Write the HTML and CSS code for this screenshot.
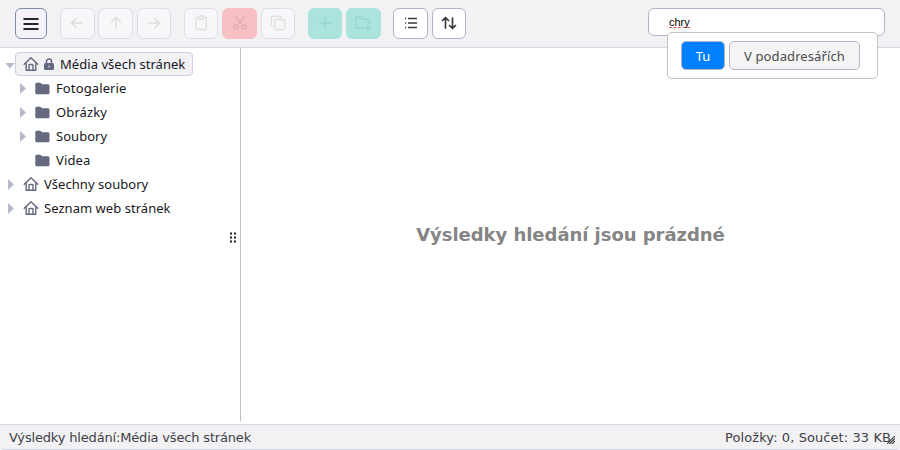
FILE: index.html
```
<!DOCTYPE html>
<html lang="cs">
<head>
<meta charset="utf-8">
<title>Média</title>
<link rel="stylesheet" href="styles.css">
</head>
<body>
<svg class="defs" width="0" height="0">
  <symbol id="home" viewBox="0 0 16 16"><path d="M1.2 8.2 8 1.8l6.800 6.400M3.200 7v7.200h9.600V7M6 14V9.300q0-.8.8-.8h2.400q.8 0 .8.800V14" fill="none" stroke="currentColor" stroke-width="1.400" stroke-linejoin="round" stroke-linecap="round"/></symbol>
  <symbol id="folder" viewBox="0 0 15 13"><path d="M.3 2Q.3.700 1.600.700H5q.8 0 1.200.6l.8 1h6q1.500 0 1.500 1.500v7q0 1.500-1.500 1.500H1.800Q.3 12.300.3 10.800z" fill="currentColor"/></symbol>
</svg>
<div class="app">
  <header class="toolbar">
    <button class="btn menu"><svg width="16" height="14" viewBox="0 0 16 14"><path d="M.5 2h15M.5 7h15M.5 12h15" stroke="#26242c" stroke-width="2"/></svg></button>
    <div class="group">
      <button class="btn off"><svg class="ic" viewBox="0 0 16 16"><path d="M13.500 8H3M7 3.500 2.500 8 7 12.500"/></svg></button>
      <button class="btn off"><svg class="ic" viewBox="0 0 16 16"><path d="M8 13.500V3M3.500 7 8 2.500 12.500 7"/></svg></button>
      <button class="btn off"><svg class="ic" viewBox="0 0 16 16"><path d="M2.500 8H13M9 3.500 13.500 8 9 12.500"/></svg></button>
    </div>
    <div class="group">
      <button class="btn off"><svg class="ic" viewBox="0 0 16 16"><rect x="2.800" y="2.500" width="10.400" height="12" rx="1.500"/><rect x="5.500" y="1" width="5" height="3" rx="1.200" fill="#f7f7f9"/></svg></button>
      <button class="btn red"><svg class="ic" viewBox="0 0 16 16"><path d="M3.500 1.500 10.800 10.700M12.500 1.500 5.200 10.700"/><circle cx="4" cy="12" r="2"/><circle cx="12" cy="12" r="2"/></svg></button>
      <button class="btn off"><svg class="ic" viewBox="0 0 16 16"><rect x="4.800" y="4.500" width="10" height="10" rx="1.500"/><path d="M2.500 11Q1.500 10.800 1.500 9.800V2.500Q1.500 1.300 2.700 1.300H10Q11 1.300 11.200 2.300"/></svg></button>
    </div>
    <div class="group">
      <button class="btn green"><svg class="ic" viewBox="0 0 16 16"><path d="M8 2.500v11M2.500 8h11"/></svg></button>
      <button class="btn green"><svg class="ic" viewBox="0 0 16 16"><path d="M8.500 13H2.200Q1 13 1 11.800V3.200Q1 2 2.200 2h3.300l1.800 2.300h6Q14.500 4.300 14.500 5.500v3.300M13 10.500v5M10.500 13h5"/></svg></button>
    </div>
    <div class="group">
      <button class="btn view"><svg class="ic" viewBox="0 0 16 16"><path d="M5 3.500h9M5 8h9M5 12.500h9M2 3.500h1.200M2 8h1.200M2 12.500h1.200" stroke-linecap="butt"/></svg></button>
      <button class="btn view"><svg class="ic bold" viewBox="0 0 16 16"><path d="M4.500 13V3M1.500 5.500l3-3 3 3M11.500 3v10M8.500 10.500l3 3 3-3"/></svg></button>
    </div>
    <div class="search">
      <span class="query">chry</span>
      <div class="scope"><button class="choice on">Tu</button><button class="choice sub">V podadresářích</button></div>
    </div>
  </header>
  <main class="work">
    <nav class="tree">
      <div class="row root"><i class="down"></i><div class="current"><svg class="home"><use href="#home"/></svg><svg class="lock" viewBox="0 0 10 12"><path d="M2.500 6V3.500a2.500 2.500 0 0 1 5 0V6" fill="none" stroke="currentColor" stroke-width="1.500"/><rect y="5" width="10" height="7" rx="1.500" fill="currentColor"/><path d="M5 7.500v2" stroke="#f2f2f5"/></svg><span>Média všech stránek</span></div></div>
      <div class="row child"><i class="right"></i><svg class="folder"><use href="#folder"/></svg><span class="wide">Fotogalerie</span></div>
      <div class="row child"><i class="right"></i><svg class="folder"><use href="#folder"/></svg><span class="wide">Obrázky</span></div>
      <div class="row child"><i class="right"></i><svg class="folder"><use href="#folder"/></svg><span>Soubory</span></div>
      <div class="row child"><i class="right none"></i><svg class="folder"><use href="#folder"/></svg><span class="wide">Videa</span></div>
      <div class="row top"><i class="right"></i><svg class="home"><use href="#home"/></svg><span>Všechny soubory</span></div>
      <div class="row top"><i class="right"></i><svg class="home"><use href="#home"/></svg><span>Seznam web stránek</span></div>
      <svg class="grip" width="6" height="11" viewBox="0 0 6 11"><path d="M0 .5h2v2H0zM4 .5h2v2H4zM0 4.500h2v2H0zM4 4.500h2v2H4zM0 8.500h2v2H0zM4 8.500h2v2H4z" fill="#222"/></svg>
    </nav>
    <section class="results"><h1>Výsledky hledání jsou prázdné</h1></section>
  </main>
  <footer class="status"><span class="path">Výsledky hledání:Média všech stránek</span><span class="stat">Položky: 0, Součet: 33 KB</span><svg class="resize" width="8" height="8" viewBox="0 0 8 8"><path d="M0 8 8 0M2.500 8 8 2.500M5 8l3-3" stroke="#444" stroke-width="1.200"/></svg></footer>
</div>
</body>
</html>
```
FILE: styles.css
```
* { box-sizing: border-box; }
body { margin: 0; background: #fff; font-family: "Noto Sans", sans-serif; overflow: hidden; }
button { font: inherit; padding: 0; margin: 0; }
.defs { position: absolute; }
.app { height: 450px; display: flex; flex-direction: column; }
.toolbar { height: 48px; flex: none; display: flex; align-items: flex-start; padding: 8px 15px 0; background: #f2f2f5; border-bottom: 1px solid #d9d9de; }
.group { display: flex; gap: 3.75px; margin-right: 12.6px; }
.btn { width: 34.6px; height: 31px; border: 1px solid #dedfe7; border-radius: 6px; display: flex; align-items: center; justify-content: center; }
.menu { width: 32px; background: #f3f3f8; border-color: #7f8aab; margin-right: 13px; }
.ic { width: 16px; height: 16px; margin-top: -1px; fill: none; stroke: currentColor; stroke-width: 1.3; stroke-linecap: round; stroke-linejoin: round; }
.ic.bold { stroke-width: 1.7; }
.off { background: #f7f7f9; color: #dedee1; }
.red { background: #f8bfc5; border-color: #f8bfc5; color: #dfaeb4; }
.green { background: #aae4dc; border-color: #aae4dc; color: #98d5cd; }
.view { background: #fff; border-color: #b0b4c8; color: #3b3b3f; }
.search { position: relative; margin-left: auto; width: 237px; height: 28px; background: #fff; border: 1px solid #b0b4c8; border-radius: 6px; padding: 7px 20px; }
.query { display: block; width: max-content; height: 12px; font: 11px/12px "Liberation Sans", sans-serif; color: #000; border-bottom: 1px dashed #ee5a5a; }
.scope { position: absolute; left: 18px; top: 23px; width: 211px; height: 47px; display: flex; gap: 4px; padding: 8px 13px; background: #fff; border: 1px solid #c3c3c6; border-radius: 5px; }
.choice { height: 29px; border: 1px solid #b5b5ca; border-radius: 5px; font-size: 13px; line-height: 27px; padding-top: 1px; background: #f4f4f5; color: #4b4b4f; white-space: nowrap; }
.choice.on { width: 44px; background: #007fff; color: #fff; }
.sub { width: 131px; letter-spacing: .1px; }
.work { flex: 1; display: flex; min-height: 0; }
.tree { position: relative; width: 241px; height: 373px; border-right: 1px solid #c0c0c3; padding-top: 4px; font-size: 13px; letter-spacing: .04px; color: #17171d; }
.wide { letter-spacing: .12px; }
.row { display: flex; align-items: center; height: 24px; white-space: nowrap; }
.root { padding-left: 5px; }
.current { display: flex; align-items: center; width: 178px; height: 24px; padding-left: 7px; background: #f2f2f5; border: 1px solid #cbd1e7; border-radius: 4px; }
.child { padding-left: 20px; }
.top { padding-left: 8px; }
.down { width: 10px; height: 6px; background: #b5bac9; clip-path: polygon(0 0, 100% 0, 50% 100%); margin-top: 3px; }
.right { width: 6px; height: 11px; background: #b5bac9; clip-path: polygon(0 0, 100% 50%, 0 100%); margin-top: 1px; }
.none { visibility: hidden; }
.home { width: 16px; height: 16px; color: #646980; flex: none; }
.top .home { margin: 0 5px 0 9px; }
.lock { width: 10px; height: 12px; margin: -1px 6px 0 5px; color: #646980; flex: none; }
.folder { width: 15px; height: 13px; margin: 0 6px 0 9px; color: #646980; }
.grip { position: absolute; left: 230px; top: 184px; }
.results { flex: 1; display: flex; justify-content: center; padding-top: 174px; }
h1 { margin: 0; font: bold 18px/26px "DejaVu Sans", sans-serif; letter-spacing: -.04px; color: #858585; white-space: nowrap; }
.status { position: relative; height: 26px; flex: none; display: flex; justify-content: space-between; align-items: center; padding: 1px 9px 0; background: #f2f2f5; border-top: 1px solid #d9d9dd; border-bottom: 1px solid #d5d8e0; font: 13px/24px "DejaVu Sans", sans-serif; color: #414146; border-radius: 0 0 4px 4px; }
.path { letter-spacing: -.17px; }
.stat { letter-spacing: .08px; }
.resize { position: absolute; right: 5px; bottom: 5px; }
```
